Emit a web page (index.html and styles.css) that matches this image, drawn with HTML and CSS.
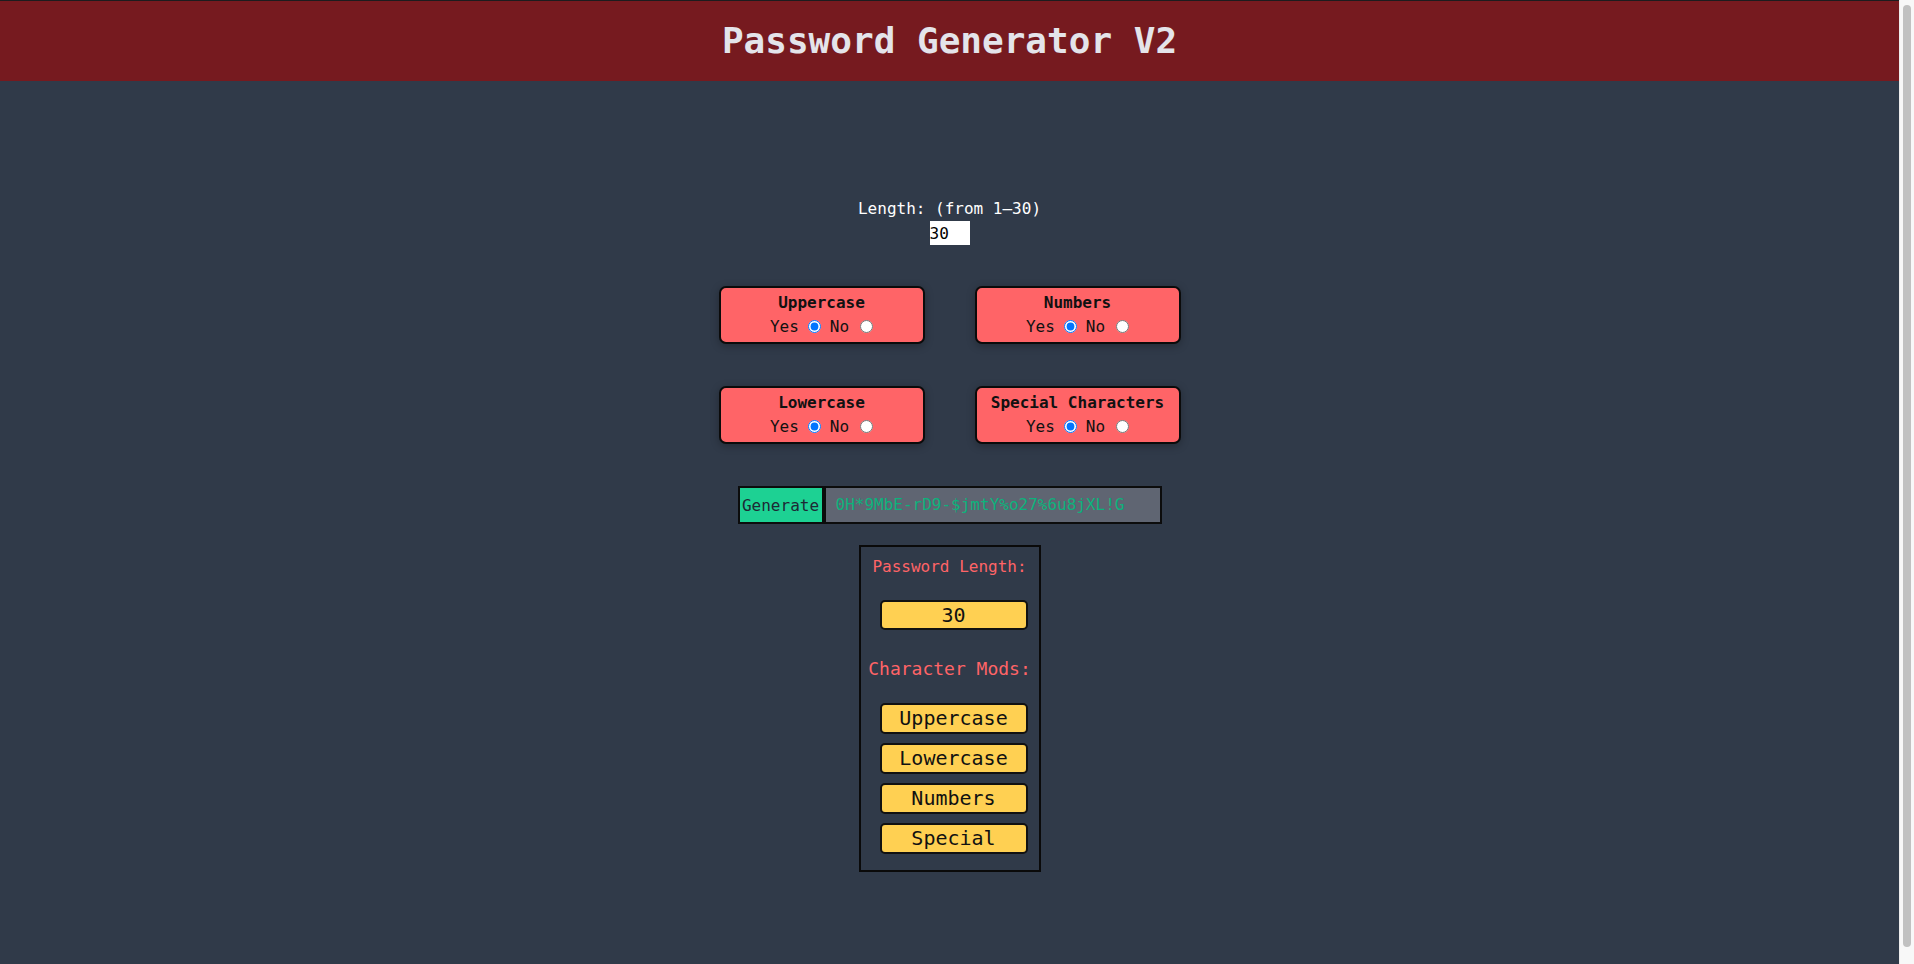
FILE: index.html
```html
<!DOCTYPE html>
<html lang="en">
<head>
<meta charset="utf-8">
<title>Password Generator V2</title>
<link rel="stylesheet" href="styles.css">
</head>
<body>
<div class="page">
<header class="topbar">
  <h1 class="title">Password Generator V2</h1>
</header>
<main class="main">
  <label class="length-label" for="len">Length: (from 1–30)</label>
  <input class="length-input" id="len" type="text" value="30">

  <div class="options">
    <div class="card">
      <div class="card-title">Uppercase</div>
      <div class="choice"><span class="yes">Yes</span><input class="radio r-yes" type="radio" name="up" checked><span class="no">No</span><input class="radio r-no" type="radio" name="up"></div>
    </div>
    <div class="card">
      <div class="card-title">Numbers</div>
      <div class="choice"><span class="yes">Yes</span><input class="radio r-yes" type="radio" name="num" checked><span class="no">No</span><input class="radio r-no" type="radio" name="num"></div>
    </div>
    <div class="card">
      <div class="card-title">Lowercase</div>
      <div class="choice"><span class="yes">Yes</span><input class="radio r-yes" type="radio" name="low" checked><span class="no">No</span><input class="radio r-no" type="radio" name="low"></div>
    </div>
    <div class="card">
      <div class="card-title">Special Characters</div>
      <div class="choice"><span class="yes">Yes</span><input class="radio r-yes" type="radio" name="spec" checked><span class="no">No</span><input class="radio r-no" type="radio" name="spec"></div>
    </div>
  </div>

  <div class="gen-row">
    <button class="gen-btn" type="button">Generate</button>
    <div class="output">0H*9MbE-rD9-$jmtY%o27%6u8jXL!G</div>
  </div>

  <section class="summary">
    <div class="sum-head">Password Length:</div>
    <div class="pill pill-len">30</div>
    <div class="sum-head2">Character Mods:</div>
    <div class="pill">Uppercase</div>
    <div class="pill">Lowercase</div>
    <div class="pill">Numbers</div>
    <div class="pill">Special</div>
  </section>
</main>
</div>
<div class="scrollbar"><div class="thumb"></div></div>
</body>
</html>
```

FILE: styles.css
```css
html {
  height: 100%;
  overflow: hidden;
  background: #303a49;
}
body {
  margin: 0;
  height: 100%;
  display: flex;
  font-family: "DejaVu Sans Mono", "Liberation Mono", monospace;
  background: #303a49;
  color: #111;
}
.page {
  flex: 1;
  min-width: 0;
}
.scrollbar {
  width: 15px;
  flex: 0 0 15px;
  box-sizing: border-box;
  background: #f8f8f8;
  border-left: 1px solid #ececec;
  padding: 5px 3px 17px 3px;
  display: flex;
}
.thumb {
  flex: 1;
  background: #c1c1c1;
  border-radius: 4px;
}
.topbar {
  border-top: 1px solid #1c1c1e;
  height: 80px;
  background: #761a1f;
  display: flex;
  align-items: center;
  justify-content: center;
}
.title {
  margin: 0;
  font-size: 36px;
  font-weight: bold;
  line-height: 42px;
  color: #e4e4ea;
}
.main {
  display: flex;
  flex-direction: column;
  align-items: center;
  padding-top: 118px;
}
.length-label {
  font-size: 16px;
  line-height: 19px;
  color: #ffffff;
}
.length-input {
  margin-top: 3px;
  width: 40px;
  height: 24px;
  box-sizing: border-box;
  border: none;
  padding: 0;
  background: #ffffff;
  color: #000;
  font-family: "DejaVu Sans Mono", monospace;
  font-size: 16px;
  outline: none;
}
.options {
  margin-top: 41px;
  display: grid;
  grid-template-columns: 206px 206px;
  column-gap: 50px;
  row-gap: 42px;
}
.card {
  box-sizing: border-box;
  height: 58px;
  border: 2px solid #0b0b0b;
  border-radius: 7px;
  background: #ff6467;
  box-shadow: 0 2px 8px rgba(0, 0, 0, 0.28);
  padding: 5px 0 6px;
  display: flex;
  flex-direction: column;
  align-items: center;
}
.card-title {
  font-size: 16px;
  font-weight: bold;
  line-height: 19px;
  height: 19px;
  margin-bottom: 4px;
  color: #111;
}
.choice {
  height: 20px;
  display: flex;
  align-items: center;
  font-size: 16px;
  color: #111;
}
.radio {
  width: 13px;
  height: 13px;
  margin: 0;
}
.r-yes {
  margin-left: 9px;
}
.no {
  margin-left: 9px;
}
.r-no {
  margin-left: 11px;
}
.gen-row {
  margin-top: 42px;
  display: flex;
}
.gen-btn {
  box-sizing: border-box;
  height: 38px;
  width: 86px;
  border: 2px solid #0c0c0c;
  border-radius: 0;
  background: #1dd193;
  color: #1d2935;
  font-family: "DejaVu Sans Mono", monospace;
  font-size: 16px;
  padding: 0;
}
.output {
  box-sizing: border-box;
  height: 38px;
  width: 338px;
  border: 2px solid #0c0c0c;
  background: #5f6572;
  color: #0db27c;
  font-size: 16px;
  line-height: 34px;
  padding-left: 10px;
}
.summary {
  margin-top: 21px;
  box-sizing: border-box;
  width: 182px;
  border: 2px solid #0a0a0a;
  padding: 10px 0 16px;
  display: flex;
  flex-direction: column;
  align-items: center;
}
.sum-head {
  font-size: 16px;
  line-height: 19px;
  color: #ff6467;
}
.sum-head2 {
  margin-top: 28px;
  font-size: 18px;
  line-height: 21px;
  color: #ff6467;
  margin-bottom: 24px;
}
.pill {
  box-sizing: border-box;
  width: 148px;
  height: 31px;
  margin-left: 8px;
  border: 2px solid #111;
  border-radius: 5px;
  background: #ffd052;
  color: #111;
  font-size: 20px;
  line-height: 27px;
  text-align: center;
}
.pill + .pill {
  margin-top: 9px;
}
.pill-len {
  margin-top: 24px;
  height: 30px;
  line-height: 26px;
}
```
